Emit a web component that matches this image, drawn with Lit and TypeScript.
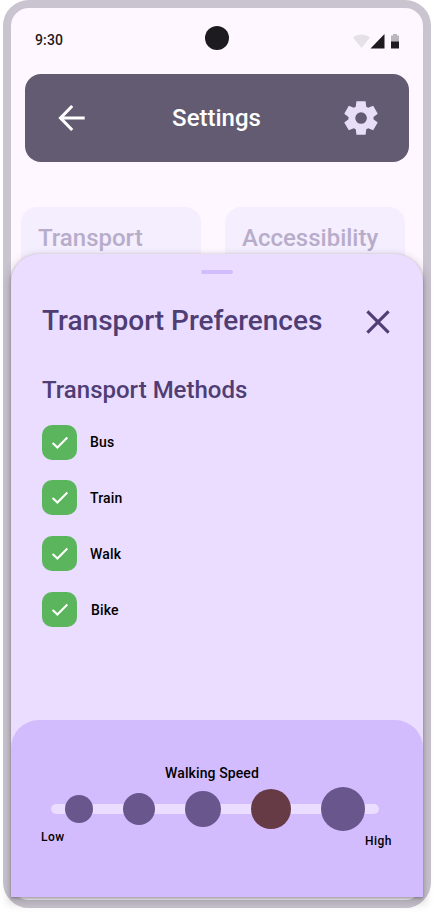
import { LitElement, html, css } from "lit";
import { customElement, state } from "lit/decorators.js";
import { classMap } from "lit/directives/class-map.js";

@customElement("app-root")
export class AppRoot extends LitElement {
  @state() private methods = ["Bus", "Train", "Walk", "Bike"];
  @state() private speed = 3;

  static styles = css`
    :host {
      display: block;
      width: 434px;
      height: 912px;
      overflow: hidden;
      background: #fff;
      font-family: Roboto, "Liberation Sans", sans-serif;
      font-weight: 500;
    }
    * { box-sizing: border-box; }
    svg { display: block; }
    .phone {
      position: relative;
      width: 428px;
      height: 908px;
      margin-left: 3px;
      border: 8px solid #cac4d0;
      border-radius: 26px;
      background: #fef7ff;
    }
    .status {
      position: relative;
      height: 52px;
      padding: 12px 23px 0 24px;
      display: flex;
      align-items: center;
      justify-content: space-between;
      color: #1d1b20;
      font-size: 14px;
      line-height: 20px;
      letter-spacing: 0.14px;
    }
    .indicators { margin-top: 2px; }
    .camera {
      position: absolute;
      left: 194px;
      top: 18px;
      width: 24px;
      height: 24px;
      border-radius: 50%;
      background: #1d1b20;
    }
    .header {
      margin: 14px 14px 0;
      height: 88px;
      border-radius: 16px;
      background: #625b71;
      display: flex;
      align-items: center;
      justify-content: space-between;
      padding: 0 28px;
      color: #fff;
      font-size: 24px;
      line-height: 32px;
    }
    .back { margin-right: 3px; }
    .cards { display: flex; gap: 24px; margin: 45px 10px 0; }
    .card {
      width: 180px;
      height: 120px;
      border-radius: 16px;
      background: #f5eefe;
      padding: 15px 17px;
      color: #b7adca;
      font-size: 24px;
      line-height: 32px;
    }
    .sheet {
      position: absolute;
      left: 0;
      top: 246px;
      width: 412px;
      height: 643px;
      border-radius: 28px 28px 0 0;
      background: #eaddff;
      box-shadow: 0 1px 3px rgba(0, 0, 0, 0.3), 0 4px 8px 3px rgba(0, 0, 0, 0.15);
      display: flex;
      flex-direction: column;
      color: #4f3d74;
    }
    .handle {
      width: 32px;
      height: 4px;
      border-radius: 2px;
      background: #d0bcff;
      margin: 16px auto 0;
      flex: none;
    }
    .title {
      display: flex;
      justify-content: space-between;
      align-items: center;
      margin: 29px 33px 0 31px;
      height: 36px;
      font-size: 28px;
      line-height: 36px;
    }
    .close { margin-top: 2px; }
    .subtitle { margin: 35px 31px 0; font-size: 24px; line-height: 32px; }
    .methods { margin: 19px 31px 0; display: grid; grid-template-rows: 55px 56px 56px 35px; }
    .method {
      display: flex;
      gap: 13px;
      height: 35px;
      align-items: center;
      color: #000;
      font-size: 14px;
      line-height: 20px;
      letter-spacing: 0.15px;
    }
    .method:first-child .name { padding-bottom: 2px; }
    .method:last-child { gap: 14px; }
    .box {
      width: 35px;
      height: 35px;
      border-radius: 10px;
      background: #5ab55c;
    }
    .speed {
      margin-top: auto;
      height: 177px;
      border-radius: 28px 28px 0 0;
      background: #d3bcfd;
      color: #000;
      padding-top: 43px;
    }
    .speed-title {
      text-align: center;
      padding-right: 10px;
      font-size: 14px;
      line-height: 20px;
      letter-spacing: 0.1px;
    }
    .steps {
      height: 44px;
      margin: 4px 44px 0 40px;
      padding: 0 14px;
      display: flex;
      align-items: center;
      gap: 30px;
      position: relative;
    }
    .steps::before {
      content: "";
      position: absolute;
      left: 0;
      right: 0;
      top: 17px;
      height: 10px;
      border-radius: 5px;
      background: #eaddff;
    }
    .dot { position: relative; flex: none; border-radius: 50%; background: #68568d; }
    .dot.active { background: #663b46; }
    .ends {
      display: flex;
      justify-content: space-between;
      align-items: flex-start;
      padding: 0 31px 0 30px;
      margin-top: -2px;
      font-size: 12px;
      line-height: 16px;
      letter-spacing: 0.5px;
    }
    .high { margin-top: 4px; }
  `;

  private check() {
    return html`<span class="box"><svg width="35" height="35" viewBox="0 0 35 35">
      <path d="M10.600 17.900L15.400 22.500L25.300 12.600" fill="none" stroke="#fff" stroke-width="2.100" />
    </svg></span>`;
  }

  render() {
    return html`
      <div class="phone">
        <div class="status">
          <span>9:30</span>
          <span class="camera"></span>
          <svg class="indicators" width="48" height="16" viewBox="0 0 48 16">
            <path d="M1 4.600C5.500 .6 13.500 .6 18 4.600L9.500 15Z" fill="#e6e0e9" />
            <path d="M32.500 1V15.500H18.500Z" fill="#1d1b20" />
            <path d="M41 1H45V2.500H47V9H39V2.500H41Z" fill="#bbb6bd" />
            <path d="M39 8.500H47V15.500H39Z" fill="#1d1b20" />
          </svg>
        </div>
        <div class="header">
          <svg class="back" width="36" height="36" viewBox="0 0 36 36" fill="none" stroke="#fff" stroke-width="3.100">
            <path d="M19.200 6L7.500 18L19.200 30M7.500 18H31.700" />
          </svg>
          <span>Settings</span>
          <svg width="40" height="40" viewBox="0 0 24 24" fill="#e8def8">
            <path d="m9.250 22l-.4-3.200q-.325-.125-.612-.3t-.563-.375L4.700 19.375l-2.750-4.750l2.575-1.950Q4.500 12.500 4.500 12.338v-.675q0-.163.025-.338L1.950 9.375l2.750-4.750l2.975 1.250q.275-.2.575-.375t.6-.3l.4-3.200h5.500l.4 3.200q.325.125.613.3t.562.375l2.975-1.250l2.750 4.750l-2.575 1.950q.025.175.025.338v.674q0 .163-.05.338l2.575 1.950l-2.750 4.750l-2.950-1.250q-.275.2-.575.375t-.6.3l-.4 3.200zm2.800-6.500q1.450 0 2.475-1.025T15.550 12t-1.025-2.475T12.050 8.500q-1.475 0-2.488 1.025T8.550 12t1.013 2.475T12.050 15.500" />
          </svg>
        </div>
        <div class="cards">
          <div class="card">Transport</div>
          <div class="card">Accessibility</div>
        </div>
        <div class="sheet">
          <div class="handle"></div>
          <div class="title">
            <span>Transport Preferences</span>
            <svg class="close" width="24" height="24" viewBox="0 0 24 24" fill="none" stroke="#4f3d74" stroke-width="3.100">
              <path d="M1.400 1.400L22.600 22.600M22.600 1.400L1.400 22.600" />
            </svg>
          </div>
          <div class="subtitle">Transport Methods</div>
          <div class="methods">
            ${this.methods.map(
              (m) => html`<div class="method">${this.check()}<span class="name">${m}</span></div>`
            )}
          </div>
          <div class="speed">
            <div class="speed-title">Walking Speed</div>
            <div class="steps">
              ${[28, 32, 36, 40, 44].map(
                (d, i) => html`<span
                  class=${classMap({ dot: true, active: i === this.speed })}
                  style="width:${d}px;height:${d}px"
                ></span>`
              )}
            </div>
            <div class="ends"><span>Low</span><span class="high">High</span></div>
          </div>
        </div>
      </div>
    `;
  }
}
